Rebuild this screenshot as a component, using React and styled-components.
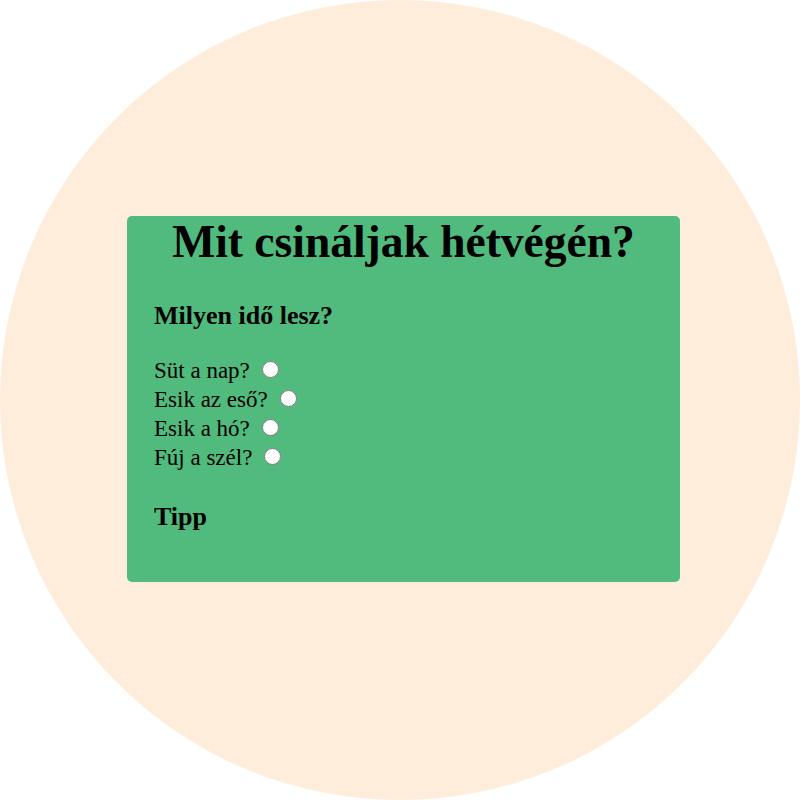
import React from 'react'
import styled, { createGlobalStyle } from 'styled-components'

const GlobalStyle = createGlobalStyle`
  html, body {
    margin: 0;
    padding: 0;
    background: #ffffff;
  }
  body {
    font-family: "Liberation Serif", "Times New Roman", serif;
    color: #000000;
  }
`

const Circle = styled.div`
  width: 800px;
  height: 800px;
  border-radius: 50%;
  background: #feedda;
  display: flex;
  align-items: center;
  justify-content: center;
`

const Card = styled.div`
  width: 553px;
  height: 366px;
  box-sizing: border-box;
  background: #51ba7d;
  border-radius: 5px;
  padding: 0 27px;
  margin-left: 7px;
  margin-top: -2px;
`

const Title = styled.h1`
  margin: 0;
  font-size: 45.5px;
  font-weight: bold;
  text-align: center;
  line-height: 52px;
`

const Heading = styled.h4`
  margin: ${(p) => p.$gap}px 0 0;
  font-size: 26px;
  font-weight: bold;
  line-height: 30px;
`

const Options = styled.div`
  margin-top: 25px;
  display: flex;
  flex-direction: column;
`

const Option = styled.label`
  display: flex;
  align-items: center;
  height: 29px;
  font-size: 23px;
`

const Radio = styled.input`
  width: 17px;
  height: 17px;
  margin: 0 0 2px 12px;
`

const options = ['Süt a nap?', 'Esik az eső?', 'Esik a hó?', 'Fúj a szél?']

export default function App() {
  return (
    <>
      <GlobalStyle />
      <Circle>
        <Card>
          <Title>Mit csináljak hétvégén?</Title>
          <Heading $gap={33}>Milyen idő lesz?</Heading>
          <Options>
            {options.map((o) => (
              <Option key={o}>
                {o}
                <Radio type="radio" name="weather" />
              </Option>
            ))}
          </Options>
          <Heading $gap={30}>Tipp</Heading>
        </Card>
      </Circle>
    </>
  )
}
